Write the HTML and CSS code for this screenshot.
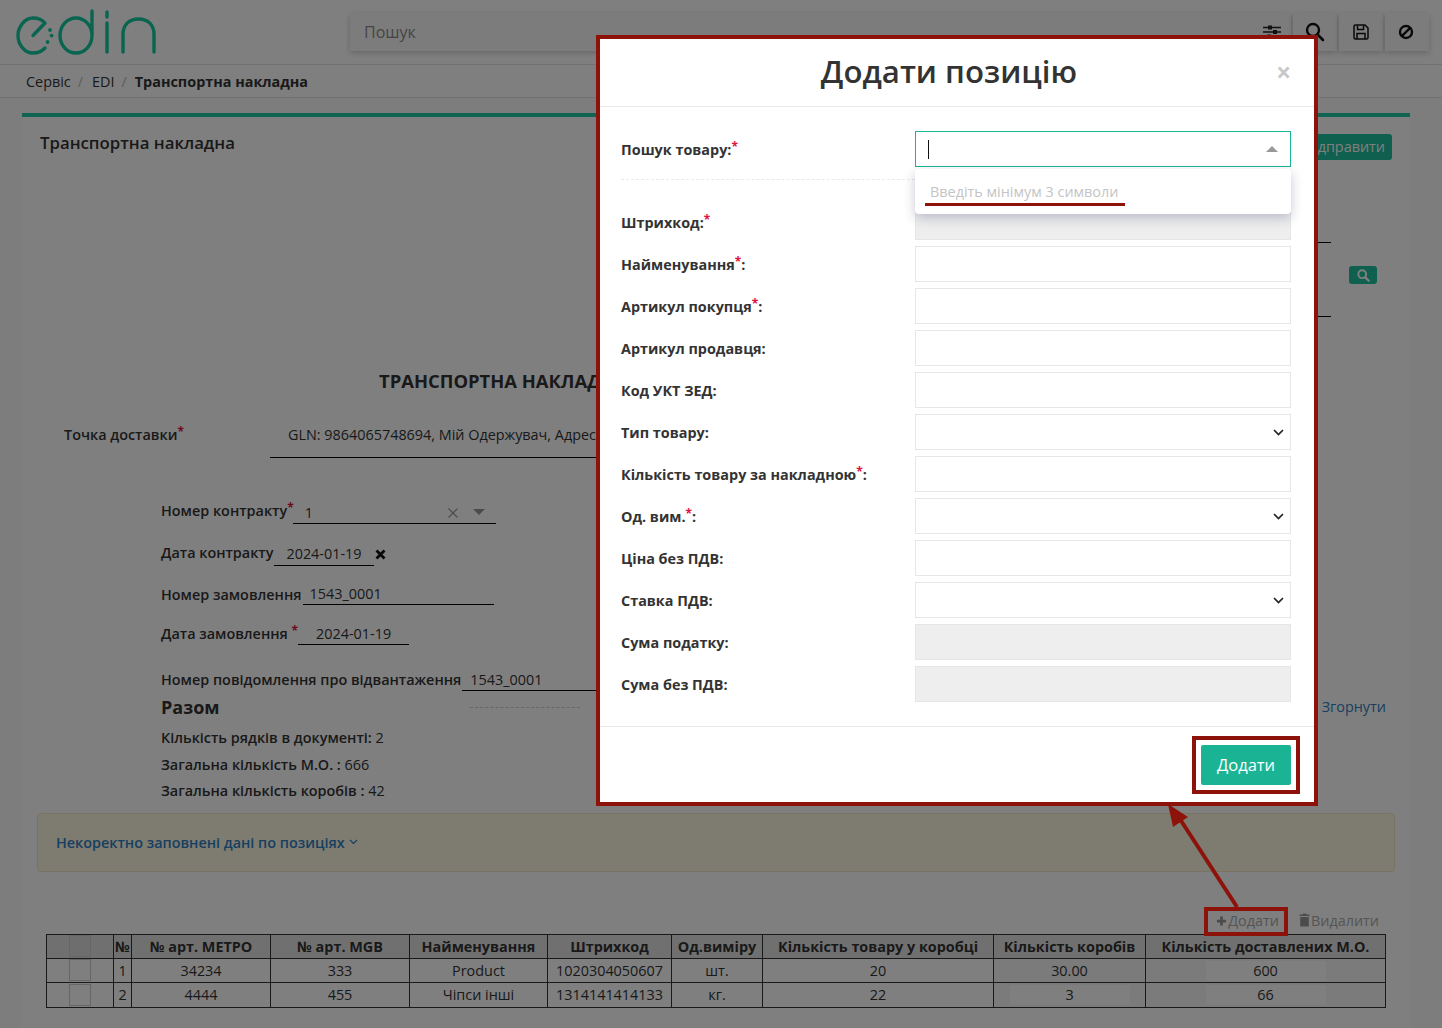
FILE: index.html
```html
<!DOCTYPE html>
<html lang="uk">
  <head>
    <meta charset="UTF-8" />
    <title>Транспортна накладна</title>
    <link rel="stylesheet" href="styles.css">
  </head>
  <body>
    <header class="topbar">
      <svg class="logo" width="140" height="50" viewBox="0 0 140 50">
        <path class="logo-line" d="M17 28.500L29 16C26 12.500 22 11 17 11C8.500 11 2 20 2 28.500C2 38 9 46 17 46C22 46 26 44 29 41" />
        <circle class="logo-dot" cx="34" cy="23" r="1.900" />
        <circle class="logo-dot" cx="35.600" cy="28.600" r="1.900" />
        <circle class="logo-dot" cx="31.600" cy="35" r="1.900" />
        <path class="logo-line" d="M76 4V28.500C76 38 69 46 60 46C51 46 44 38 44 28.500C44 19 51 11 60 11C69 11 76 19 76 28.500" />
        <path class="logo-line" d="M91 5V10M91 16V45" />
        <path class="logo-line" d="M107 45V27C107 18 113 12 122.500 12C132 12 138 18 138 27V45" />
      </svg>
      <div class="searchbox">
        <span class="search-hint">Пошук</span>
        <svg class="tool-icon" width="18" height="14" viewBox="0 0 18 14">
          <path d="M0 2.500H18M0 7H18M0 11.500H18" stroke="#222" stroke-width="1.300" />
          <rect x="5" y="0.500" width="4" height="4" fill="#222" />
          <rect x="10" y="5" width="4" height="4" fill="#222" />
          <rect x="4" y="9.500" width="4" height="4" fill="#222" />
        </svg>
      </div>
      <div class="tile">
        <svg width="20" height="20" viewBox="0 0 20 20">
          <circle cx="8" cy="8" r="6" fill="none" stroke="#111" stroke-width="2.400" />
          <path d="M12.500 12.500L18 18" stroke="#111" stroke-width="2.600" stroke-linecap="round" />
        </svg>
      </div>
      <div class="tile">
        <svg width="16" height="16" viewBox="0 0 16 16">
          <path d="M1 2.500A1.500 1.500 0 0 1 2.500 1H12L15 4V13.500A1.500 1.500 0 0 1 13.500 15H2.500A1.500 1.500 0 0 1 1 13.500Z" fill="none" stroke="#111" stroke-width="1.500" />
          <path d="M4.500 1.500V5.500H10.500V1.500M4 15V9.500H12V15" fill="none" stroke="#111" stroke-width="1.500" />
        </svg>
      </div>
      <div class="tile tile-last">
        <svg width="16" height="16" viewBox="0 0 16 16">
          <circle cx="8" cy="8" r="6" fill="none" stroke="#111" stroke-width="2.400" />
          <path d="M3.800 12.200L12.200 3.800" stroke="#111" stroke-width="2.400" />
        </svg>
      </div>
    </header>

    <nav class="crumbs">
      <span>Сервіс</span><i>/</i><span>EDI</span><i>/</i><b>Транспортна накладна</b>
    </nav>

    <main class="panel">
      <div class="panel-head">
        <h1>Транспортна накладна</h1>
        <button class="send-btn">Відправити</button>
      </div>

      <div class="party">
        <div class="party-fields">
          <div class="party-line first"></div>
          <div class="party-line"></div>
        </div>
        <button class="find-btn">
          <svg width="13" height="13" viewBox="0 0 20 20">
            <circle cx="8" cy="8" r="6" fill="none" stroke="#fff" stroke-width="3" />
            <path d="M12.500 12.500L18 18" stroke="#fff" stroke-width="3.400" stroke-linecap="round" />
          </svg>
        </button>
      </div>

      <h2 class="doc-title">ТРАНСПОРТНА НАКЛАДНА</h2>

      <div class="delivery">
        <label>Точка доставки<em>*</em></label>
        <div class="delivery-value">GLN: 9864065748694, Мій Одержувач, Адрес</div>
      </div>

      <div class="doc-form">
        <div class="row row-contract">
          <label>Номер контракту<em>*</em></label>
          <div class="val val-contract">
            <span>1</span>
            <svg class="val-clear" width="10" height="10" viewBox="0 0 10 10">
              <path d="M0.500 0.500L9.500 9.500M9.500 0.500L0.500 9.500" stroke="#999" stroke-width="1.100" />
            </svg>
            <span class="val-caret"></span>
          </div>
        </div>
        <div class="row row-cdate">
          <label>Дата контракту</label>
          <div class="val val-cdate">2024-01-19</div>
          <svg class="date-clear" width="11" height="11" viewBox="0 0 11 11">
            <path d="M1.500 1.500L9.500 9.500M9.500 1.500L1.500 9.500" stroke="#111" stroke-width="2.800" />
          </svg>
        </div>
        <div class="row row-order">
          <label>Номер замовлення</label>
          <div class="val val-order">1543_0001</div>
        </div>
        <div class="row row-odate">
          <label>Дата замовлення <em>*</em></label>
          <div class="val val-odate">2024-01-19</div>
        </div>
        <div class="row row-notice">
          <label>Номер повідомлення про відвантаження</label>
          <div class="val val-notice">1543_0001</div>
        </div>
      </div>

      <div class="totals-head">
        <h3>Разом</h3>
        <span class="totals-dots"></span>
        <a class="collapse">Згорнути</a>
      </div>
      <ul class="totals">
        <li>Кількість рядків в документі: <span>2</span></li>
        <li>Загальна кількість М.О. : <span>666</span></li>
        <li>Загальна кількість коробів : <span>42</span></li>
      </ul>

      <div class="warning">
        <a>Некоректно заповнені дані по позиціях</a>
        <svg width="9" height="6" viewBox="0 0 9 6">
          <path d="M1 1L4.500 4.500L8 1" fill="none" stroke="#2f7fc1" stroke-width="1.200" />
        </svg>
      </div>

      <div class="table-tools">
        <span class="tool">
          <svg width="11" height="12" viewBox="0 0 12 12"><path d="M6 1V11M1 6H11" stroke="#999" stroke-width="3" /></svg>Додати
        </span>
        <span class="tool">
          <svg width="11" height="14" viewBox="0 0 11 14"><path d="M4 0.500H7L7.500 1.500H10.500V3H0.500V1.500H3.500ZM1.200 4H9.800V13.500H1.200Z" fill="#999" /></svg>Видалити
        </span>
      </div>

      <table class="items">
        <colgroup>
          <col class="c-check"><col class="c-num"><col class="c-art"><col class="c-art"><col class="c-name">
          <col class="c-code"><col class="c-unit"><col class="c-box"><col class="c-boxes"><col class="c-total">
        </colgroup>
        <thead>
          <tr>
            <th><span class="check"></span></th>
            <th>№</th>
            <th>№ арт. МЕТРО</th>
            <th>№ арт. MGB</th>
            <th>Найменування</th>
            <th>Штрихкод</th>
            <th>Од.виміру</th>
            <th>Кількість товару у коробці</th>
            <th>Кількість коробів</th>
            <th>Кількість доставлених М.О.</th>
          </tr>
        </thead>
        <tbody>
          <tr>
            <td><span class="check"></span></td>
            <td>1</td>
            <td>34234</td>
            <td>333</td>
            <td>Product</td>
            <td>1020304050607</td>
            <td>шт.</td>
            <td>20</td>
            <td class="editable">30.00</td>
            <td class="editable"><span class="cell-input">600</span></td>
          </tr>
          <tr>
            <td><span class="check"></span></td>
            <td>2</td>
            <td>4444</td>
            <td>455</td>
            <td>Чіпси інші</td>
            <td>1314141414133</td>
            <td>кг.</td>
            <td>22</td>
            <td class="editable"><span class="cell-input">3</span></td>
            <td class="editable"><span class="cell-input">66</span></td>
          </tr>
        </tbody>
      </table>
    </main>

    <div class="backdrop"></div>

    <section class="modal">
      <div class="modal-head">
        <h2>Додати позицію</h2>
        <span class="modal-close">×</span>
      </div>
      <div class="modal-body">
        <div class="m-row m-search">
          <label>Пошук товару:<em>*</em></label>
          <div class="m-select is-open">
            <span class="text-cursor"></span>
            <span class="caret-up"></span>
          </div>
        </div>
        <div class="m-rule"></div>
        <div class="m-row">
          <label>Штрихкод:<em>*</em></label>
          <input class="m-input" disabled>
        </div>
        <div class="m-row">
          <label>Найменування<em>*</em>:</label>
          <input class="m-input">
        </div>
        <div class="m-row">
          <label>Артикул покупця<em>*</em>:</label>
          <input class="m-input">
        </div>
        <div class="m-row">
          <label>Артикул продавця:</label>
          <input class="m-input">
        </div>
        <div class="m-row">
          <label>Код УКТ ЗЕД:</label>
          <input class="m-input">
        </div>
        <div class="m-row">
          <label>Тип товару:</label>
          <div class="m-select">
            <svg class="chevron" width="11" height="7" viewBox="0 0 11 7"><path d="M1 1L5.500 5.500L10 1" fill="none" stroke="#222" stroke-width="1.700" /></svg>
          </div>
        </div>
        <div class="m-row">
          <label>Кількість товару за накладною<em>*</em>:</label>
          <input class="m-input">
        </div>
        <div class="m-row">
          <label>Од. вим.<em>*</em>:</label>
          <div class="m-select">
            <svg class="chevron" width="11" height="7" viewBox="0 0 11 7"><path d="M1 1L5.500 5.500L10 1" fill="none" stroke="#222" stroke-width="1.700" /></svg>
          </div>
        </div>
        <div class="m-row">
          <label>Ціна без ПДВ:</label>
          <input class="m-input">
        </div>
        <div class="m-row">
          <label>Ставка ПДВ:</label>
          <div class="m-select">
            <svg class="chevron" width="11" height="7" viewBox="0 0 11 7"><path d="M1 1L5.500 5.500L10 1" fill="none" stroke="#222" stroke-width="1.700" /></svg>
          </div>
        </div>
        <div class="m-row">
          <label>Сума податку:</label>
          <input class="m-input" disabled>
        </div>
        <div class="m-row">
          <label>Сума без ПДВ:</label>
          <input class="m-input" disabled>
        </div>

        <div class="dropdown">
          <span>Введіть мінімум 3 символи</span>
          <div class="dropdown-mark"></div>
        </div>
      </div>
      <div class="modal-foot">
        <div class="btn-mark">
          <button class="add-btn">Додати</button>
        </div>
      </div>
    </section>

    <svg class="notes" width="1442" height="1028" viewBox="0 0 1442 1028">
      <rect x="1206" y="909" width="80" height="25" fill="none" stroke="#8d130a" stroke-width="4" />
      <path d="M1237 907L1178 816" stroke="#8d130a" stroke-width="4" />
      <polygon points="1168,804 1188,817 1173,827" fill="#8d130a" />
    </svg>
  </body>
</html>
```

FILE: styles.css
```css
* {
  box-sizing: border-box;
}
html,
body {
  height: 1028px;
  overflow: hidden;
}
body {
  margin: 0;
  position: relative;
  font-family: "Open Sans", sans-serif;
  font-size: 14.400px;
  color: #333;
  background: #fafafa;
}
label {
  font-weight: 600;
}
em {
  color: #e0123f;
  font-style: normal;
  font-size: 12px;
  font-weight: 700;
  position: relative;
  top: -4px;
}

/* header */
.topbar {
  height: 65px;
  display: flex;
  align-items: flex-start;
  padding: 13px 13px 0 16px;
  background: #fff;
  border-bottom: 1px solid #e4e4e4;
  gap: 2px;
}
.logo {
  margin: -6px 192px 0 0;
  flex: none;
}
.logo-line {
  fill: none;
  stroke: #12c9a0;
  stroke-width: 3.400;
  stroke-linecap: round;
  stroke-linejoin: round;
}
.logo-dot {
  fill: #12c9a0;
}
.searchbox {
  flex: 1;
  height: 38px;
  display: flex;
  align-items: center;
  justify-content: space-between;
  padding: 0 10px 0 14px;
  background: #f9f9f9;
  box-shadow: 0 2px 6px rgba(0, 0, 0, 0.2);
}
.search-hint {
  font-size: 16px;
  color: #8a8a8a;
}
.tile {
  width: 44px;
  height: 38px;
  display: flex;
  align-items: center;
  justify-content: center;
  background: #f9f9f9;
  box-shadow: 0 2px 6px rgba(0, 0, 0, 0.2);
}
.tile-last {
  padding-right: 2px;
}
.crumbs {
  height: 33px;
  display: flex;
  align-items: center;
  padding-left: 26px;
  background: #fff;
  border-bottom: 1px solid #e4e4e4;
}
.crumbs i {
  font-style: normal;
  color: #bbb;
  margin: 0 9px 0 7px;
}
.crumbs b {
  margin-left: -1px;
  font-weight: 700;
}

/* document panel */
.panel {
  width: 1388px;
  height: 931px;
  margin: 15px 0 0 22px;
  background: #fff;
  border-top: 4px solid #1ec8a6;
}
.panel-head {
  height: 53px;
  display: flex;
  align-items: flex-start;
  justify-content: space-between;
  padding: 0 18px;
}
.panel-head h1 {
  margin: 12px 0 0;
  font-size: 16.800px;
  line-height: 28px;
  font-weight: 600;
}
.send-btn {
  width: 110px;
  height: 26px;
  margin-top: 17px;
  padding: 0 7px 2px 0;
  border: none;
  border-radius: 3px;
  background: #1ec09c;
  color: #fff;
  text-align: right;
  font: 14.400px "Open Sans", sans-serif;
}
.party {
  height: 199px;
  display: flex;
  justify-content: flex-end;
  padding-right: 33px;
  gap: 18px;
}
.party-fields {
  width: 340px;
}
.party-line {
  height: 74px;
  border-bottom: 1px solid #000;
}
.party-line.first {
  height: 73px;
}
.find-btn {
  width: 28px;
  height: 18px;
  margin-top: 96px;
  padding: 0;
  border: none;
  border-radius: 3px;
  background: #1ec09c;
  display: flex;
  align-items: center;
  justify-content: center;
}
.doc-title {
  height: 24px;
  margin: 0;
  padding-left: 357px;
  font-size: 18.400px;
  line-height: 24px;
  font-weight: 700;
  white-space: nowrap;
}
.delivery {
  height: 34px;
  margin-top: 31px;
  display: flex;
  padding-left: 42px;
  line-height: 21px;
}
.delivery label {
  width: 206px;
}
.delivery-value {
  width: 326px;
  padding-left: 18px;
  border-bottom: 1px solid #000;
  white-space: nowrap;
  overflow: hidden;
}
.doc-form {
  padding-left: 139px;
}
.row {
  height: 25px;
  display: flex;
  align-items: flex-end;
  white-space: nowrap;
}
.row label {
  line-height: 24px;
}
.row-cdate label {
  margin-bottom: 1px;
}
.row-contract {
  margin-top: 41px;
}
.row-cdate {
  margin-top: 17px;
}
.row-order {
  margin-top: 14px;
}
.row-order label {
  margin-bottom: -2px;
}
.row-odate {
  margin-top: 15px;
}
.row-odate label {
  margin-bottom: -2px;
}
.row-notice label {
  margin-bottom: -1px;
}
.row-notice {
  margin-top: 21px;
}
.val {
  height: 20px;
  line-height: 17px;
  border-bottom: 1px solid #000;
}
.val-contract {
  width: 203px;
  margin-left: -1px;
  padding: 0 0 2px 12px;
  display: flex;
  align-items: center;
}
.val-clear {
  margin: 1px 0 0 135px;
}
.val-caret {
  margin: -1px 0 0 15px;
  border-top: 6px solid #999;
  border-left: 6px solid transparent;
  border-right: 6px solid transparent;
}
.val-cdate {
  width: 100px;
  margin-left: 1px;
  padding-left: 12px;
  line-height: 15px;
}
.date-clear {
  margin: 0 0 6px 1px;
}
.val-order {
  width: 191px;
  margin-left: 1px;
  padding-left: 7px;
}
.val-odate {
  width: 111px;
  padding-left: 18px;
}
.val-notice {
  width: 200px;
  margin-left: 1px;
  padding-left: 8px;
}
.totals-head {
  height: 30px;
  display: flex;
  align-items: center;
  padding: 0 24px 0 139px;
  margin-top: 1px;
}
.totals-head h3 {
  margin: 0;
  font-size: 18px;
  font-weight: 700;
}
.totals-dots {
  width: 110px;
  margin-left: 250px;
  border-bottom: 1px dashed #ccc;
}
.collapse {
  margin: 0 0 2px auto;
  color: #2f7fc1;
}
.totals {
  list-style: none;
  margin: 3px 0 0;
  padding-left: 139px;
}
.totals li {
  height: 26.500px;
  line-height: 26.500px;
  font-weight: 600;
}
.totals span {
  font-weight: 400;
}
.warning {
  width: 1358px;
  height: 59px;
  margin: 8px 0 0 15px;
  padding-left: 18px;
  display: flex;
  align-items: center;
  gap: 4px;
  background: #fcf8e3;
  border: 1px solid #f2e9c4;
  border-radius: 4px;
  color: #2f7fc1;
  font-weight: 600;
}
.table-tools {
  height: 24px;
  margin: 38px 0 0;
  padding: 0 31px 3px 0;
  display: flex;
  justify-content: flex-end;
  align-items: center;
  gap: 20px;
  color: #aaa;
}
.tool svg {
  margin-right: 1px;
  vertical-align: -1px;
}
.items {
  width: 1339px;
  margin-left: 24px;
  table-layout: fixed;
  border-collapse: collapse;
  text-align: center;
}
.c-check { width: 67px; }
.c-num { width: 18px; }
.c-art { width: 139px; }
.c-name { width: 138px; }
.c-code { width: 124px; }
.c-unit { width: 91px; }
.c-box { width: 231px; }
.c-boxes { width: 152px; }
.c-total { width: 240px; }
.items th,
.items td {
  height: 24px;
  padding: 0;
  border: 1px solid #333;
  overflow: hidden;
  white-space: nowrap;
}
.items th {
  background: #e1e1e1;
  font-weight: 700;
}
.items tbody tr:last-child td {
  height: 25px;
}
.check {
  display: block;
  width: 22px;
  height: 22px;
  margin-left: 22px;
  border: 1px solid #ccc;
  background: #fff;
}
.items th .check {
  background: #ddd;
}
.items td.editable {
  background: #f6f6f6;
}
.cell-input {
  display: block;
  width: 120px;
  height: 20px;
  margin: 1px auto 0;
  line-height: 20px;
  background: #fff;
}

/* dim layer, dialog and the arrows drawn on the screenshot */
.backdrop {
  position: absolute;
  inset: 0;
  background: rgba(0, 0, 0, 0.5);
}
.modal {
  position: absolute;
  left: 596px;
  top: 35px;
  width: 722px;
  height: 771px;
  background: #fff;
  border: 4px solid #8d130a;
}
.modal-head {
  height: 68px;
  position: relative;
  padding-right: 16px;
  border-bottom: 1px solid #e7eaec;
  text-align: center;
}
.modal-head h2 {
  margin: 0;
  font-size: 31.200px;
  line-height: 64px;
  font-weight: 600;
  color: #333;
}
.modal-close {
  position: absolute;
  top: 13px;
  right: 23px;
  font-size: 26px;
  line-height: 40px;
  font-weight: 700;
  color: #c8c8c8;
}
.modal-body {
  height: 619px;
  position: relative;
  padding: 24px 23px 0 21px;
}
.m-row {
  height: 36px;
  margin-bottom: 6px;
  display: flex;
  align-items: center;
  justify-content: space-between;
}
.m-row label {
  font-weight: 700;
  white-space: nowrap;
}
.m-search {
  margin-bottom: 0;
}
.m-rule {
  height: 13px;
  margin-bottom: 24px;
  border-bottom: 1px dashed #e7eaec;
}
.m-input,
.m-select {
  width: 376px;
  height: 36px;
  padding: 0 6px;
  border: 1px solid #e5e6e7;
  background: #fff;
  display: flex;
  align-items: center;
  justify-content: flex-end;
}
.m-input[disabled] {
  background: #eee;
}
.m-select.is-open {
  border-color: #1ab394;
  justify-content: space-between;
  padding-left: 12px;
  padding-right: 12px;
}
.text-cursor {
  width: 1px;
  height: 19px;
  background: #111;
}
.caret-up {
  border-bottom: 6px solid #999;
  border-left: 6px solid transparent;
  border-right: 6px solid transparent;
}
.chevron {
  flex: none;
}
.dropdown {
  position: absolute;
  left: 315px;
  top: 62px;
  width: 376px;
  height: 45px;
  padding: 14px 15px 0;
  background: #fff;
  border-radius: 4px;
  box-shadow: 0 4px 12px rgba(30, 40, 90, 0.25);
  line-height: 18px;
  color: #c4c4c4;
}
.dropdown-mark {
  position: absolute;
  left: 10px;
  top: 34px;
  width: 200px;
  height: 3px;
  background: #8d130a;
}
.modal-foot {
  height: 76px;
  padding: 9px 14px 0 0;
  display: flex;
  justify-content: flex-end;
  align-items: flex-start;
  border-top: 1px solid #e7eaec;
}
.btn-mark {
  padding: 5px;
  border: 4px solid #8d130a;
}
.add-btn {
  display: block;
  width: 90px;
  height: 40px;
  padding: 0 0 2px;
  border: none;
  border-radius: 2px;
  background: #1ab394;
  color: #fff;
  font: 16.500px "Open Sans", sans-serif;
}
.notes {
  position: absolute;
  left: 0;
  top: 0;
}
```
